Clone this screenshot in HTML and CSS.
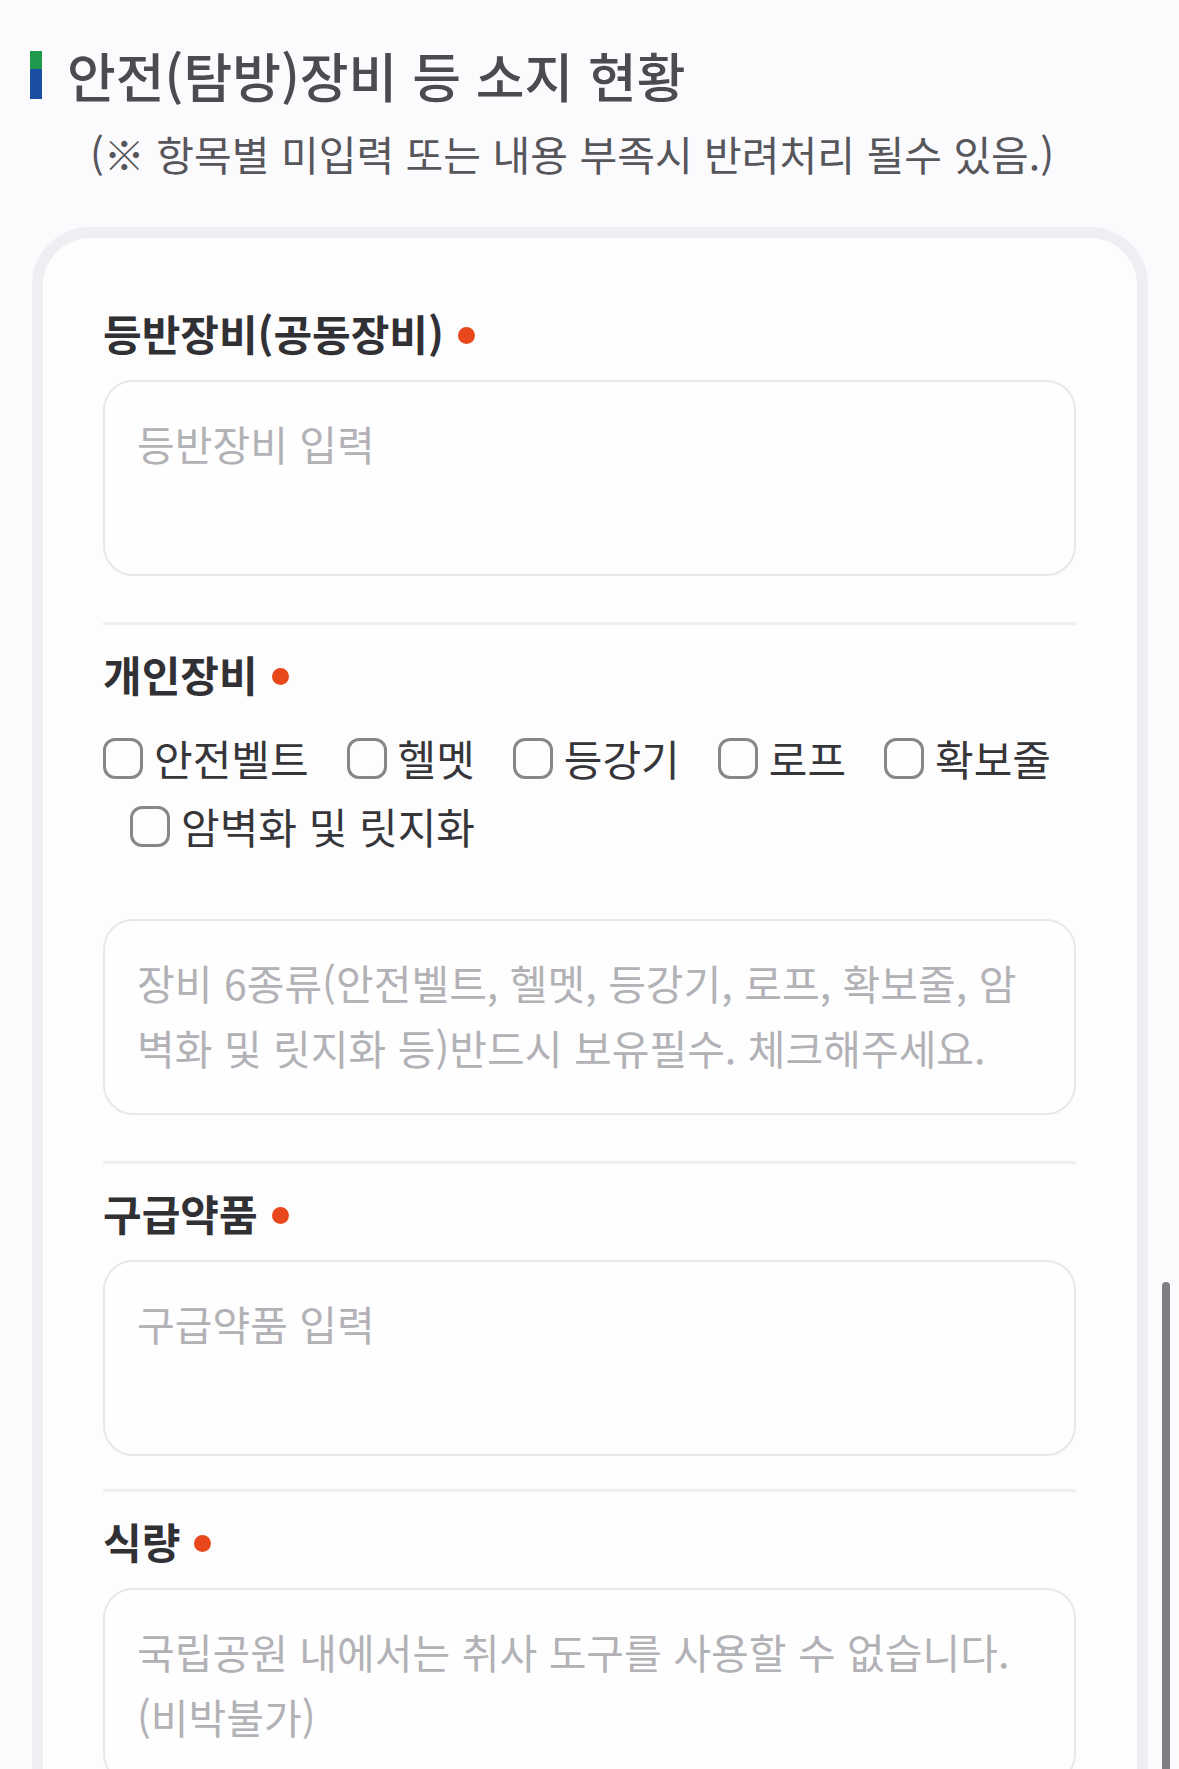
FILE: index.html
```html
<!DOCTYPE html>
<html lang="ko">
<head>
<meta charset="utf-8">
<title>안전(탐방)장비 등 소지 현황</title>
<link rel="stylesheet" href="styles.css">
</head>
<body>
<main class="page">
  <header class="heading">
    <span class="accent"></span>
    <h2 class="title">안전(탐방)장비 등 소지 현황</h2>
  </header>
  <p class="notice">(※ 항목별 미입력 또는 내용 부족시 반려처리 될수 있음.)</p>

  <section class="card">
    <div class="field">
      <div class="label">등반장비(공동장비)<span class="req"></span></div>
      <div class="input"><span class="ph">등반장비 입력</span></div>
    </div>
    <hr class="divider">

    <div class="field">
      <div class="label">개인장비<span class="req"></span></div>
      <div class="checks">
        <label class="check"><span class="box"></span><span class="ctext">안전벨트</span></label>
        <label class="check"><span class="box"></span><span class="ctext">헬멧</span></label>
        <label class="check"><span class="box"></span><span class="ctext">등강기</span></label>
        <label class="check"><span class="box"></span><span class="ctext">로프</span></label>
        <label class="check"><span class="box"></span><span class="ctext">확보줄</span></label>
        <label class="check check-indent"><span class="box"></span><span class="ctext">암벽화 및 릿지화</span></label>
      </div>
      <div class="input"><span class="ph line">장비 6종류(안전벨트, 헬멧, 등강기, 로프, 확보줄, 암</span><span class="ph line">벽화 및 릿지화 등)반드시 보유필수. 체크해주세요.</span></div>
    </div>
    <hr class="divider">

    <div class="field">
      <div class="label">구급약품<span class="req"></span></div>
      <div class="input"><span class="ph">구급약품 입력</span></div>
    </div>
    <hr class="divider divider-tight">

    <div class="field">
      <div class="label">식량<span class="req"></span></div>
      <div class="input"><span class="ph line">국립공원 내에서는 취사 도구를 사용할 수 없습니다.</span><span class="ph line">(비박불가)</span></div>
    </div>
  </section>
</main>
<div class="scroll-thumb"></div>
</body>
</html>
```

FILE: styles.css
```css
html, body {
  margin: 0;
  padding: 0;
  overflow: hidden;
  background: #fbfbfd;
}

body {
  font-family: "Noto Sans CJK KR", "Noto Sans", sans-serif;
  color: #333336;
}

.page {
  padding-top: 47px;
}

.heading {
  display: flex;
  align-items: center;
  height: 56px;
  padding-left: 30px;
}

.accent {
  width: 12px;
  height: 48px;
  background: linear-gradient(to bottom, #1f9a4c 0, #1f9a4c 18px, #1c4fa3 18px, #1c4fa3 100%);
  margin-right: 25px;
}

.title {
  margin: 0;
  font-size: 53px;
  line-height: 56px;
  font-weight: 500;
  color: #4b4b50;
  letter-spacing: 0;
}

.notice {
  margin: 28px 0 0;
  padding-left: 90px;
  font-size: 41px;
  line-height: 44px;
  color: #56565b;
}

.card {
  margin: 52px 31px 0 32px;
  border: 11px solid #efeef2;
  border-bottom: none;
  border-radius: 58px 58px 0 0;
  background: #fdfdfe;
  padding: 72px 61px 40px 60px;
}

.label {
  display: flex;
  align-items: center;
  font-size: 42px;
  line-height: 46px;
  font-weight: 700;
  color: #313135;
}

.req {
  width: 17px;
  height: 17px;
  border-radius: 50%;
  background: #e9481c;
  margin-left: 14px;
  margin-top: 4px;
}

.input {
  margin-top: 24px;
  height: 196px;
  box-sizing: border-box;
  border: 2px solid #e8e7eb;
  border-radius: 30px;
  background: #fefeff;
  padding: 29px 32px 0;
}

.ph {
  display: block;
  font-size: 41px;
  line-height: 65px;
  color: #b2b2b6;
  white-space: nowrap;
}

.divider {
  border: 0;
  height: 3px;
  background: #efeef2;
  margin: 46px 0 26px;
}

.divider-tight {
  margin-top: 33px;
}

.checks {
  display: flex;
  flex-wrap: wrap;
  column-gap: 38px;
  margin: 27px 0 59px;
}

.check {
  display: flex;
  align-items: center;
  height: 68px;
}

.check-indent {
  margin-left: 27px;
}

.box {
  width: 40px;
  height: 41px;
  box-sizing: border-box;
  border: 3px solid #86868b;
  border-radius: 12px;
  margin-right: 11px;
}

.ctext {
  font-size: 42px;
  line-height: 46px;
  color: #36363a;
}

.scroll-thumb {
  position: fixed;
  right: 9px;
  top: 1282px;
  bottom: -20px;
  width: 8px;
  border-radius: 4px;
  background: #7f7f83;
}
```
